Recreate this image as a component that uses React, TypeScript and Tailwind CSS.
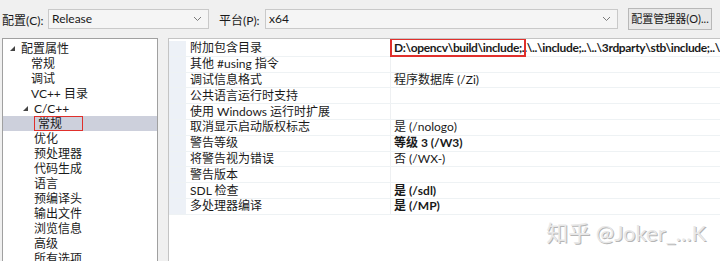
import { ReactNode } from 'react';

const FONT = {
  fontFamily: 'Lato, "Noto Sans CJK SC", sans-serif'
};

const treeItems: { label: string; level: number; open?: boolean; selected?: boolean }[] = [
  { label: '配置属性', level: 0, open: true },
  { label: '常规', level: 1 },
  { label: '调试', level: 1 },
  { label: 'VC++ 目录', level: 1 },
  { label: 'C/C++', level: 1, open: true },
  { label: '常规', level: 2, selected: true },
  { label: '优化', level: 2 },
  { label: '预处理器', level: 2 },
  { label: '代码生成', level: 2 },
  { label: '语言', level: 2 },
  { label: '预编译头', level: 2 },
  { label: '输出文件', level: 2 },
  { label: '浏览信息', level: 2 },
  { label: '高级', level: 2 },
  { label: '所有选项', level: 2 }
];

const props: { name: string; value?: string; bold?: boolean; first?: boolean }[] = [
  { name: '附加包含目录', first: true },
  { name: '其他 #using 指令' },
  { name: '调试信息格式', value: '程序数据库 (/Zi)' },
  { name: '公共语言运行时支持' },
  { name: '使用 Windows 运行时扩展' },
  { name: '取消显示启动版权标志', value: '是 (/nologo)' },
  { name: '警告等级', value: '等级 3 (/W3)', bold: true },
  { name: '将警告视为错误', value: '否 (/WX-)' },
  { name: '警告版本' },
  { name: 'SDL 检查', value: '是 (/sdl)', bold: true },
  { name: '多处理器编译', value: '是 (/MP)', bold: true }
];

function Chevron() {
  return (
    <svg width="9" height="6" viewBox="0 0 9 6" className="shrink-0">
      <path d="M1 1 L4.5 4.5 L8 1" fill="none" stroke="#7a7a7a" strokeWidth="1" />
    </svg>
  );
}

function Combo({ value, className }: { value: string; className: string }) {
  return (
    <div
      className={`h-[20px] border border-[#c9c9c9] bg-[#f5f5f5] flex items-center justify-between pl-[3px] pr-[6px] ${className}`}
    >
      <span className="text-[12px] text-[#1a1a1a]">{value}</span>
      <Chevron />
    </div>
  );
}

function Triangle() {
  return (
    <svg width="7" height="7" viewBox="0 0 7 7" className="shrink-0">
      <path d="M6 1 L6 6 L1 6 Z" fill="#444" />
    </svg>
  );
}

function Label({ children }: { children: ReactNode }) {
  return <span className="text-[12px] text-[#1a1a1a] whitespace-nowrap">{children}</span>;
}

export default function App() {
  return (
    <div
      className="w-[720px] h-[261px] bg-[#f0f0f0] overflow-hidden flex flex-col text-[#1a1a1a]"
      style={FONT}
    >
      <div className="h-[38px] shrink-0 flex items-center pl-[2px] pr-[8px]">
        <span className="w-[46px] shrink-0">
          <Label>配置(C):</Label>
        </span>
        <Combo value="Release" className="w-[161px]" />
        <span className="ml-[10px] w-[46px] shrink-0">
          <Label>平台(P):</Label>
        </span>
        <Combo value="x64" className="w-[353px]" />
        <div className="ml-[10px] w-[84px] h-[22px] border border-[#b8b8b8] bg-[#e8e8e8] flex items-center justify-center">
          <span className="text-[11px] whitespace-nowrap">配置管理器(O)...</span>
        </div>
      </div>

      <div className="flex-1 flex pl-[2px] gap-[10px]">
        <div className="w-[156px] border border-[#a0a0a0] border-b-0 bg-white pt-[2px] shrink-0">
          {treeItems.map((t, i) => (
            <div
              key={i}
              className={`h-[15px] flex items-center ${t.selected ? 'bg-[#cdd0dc]' : ''}`}
            >
              <div
                className={`flex items-center ${
                  t.level === 0 ? 'pl-[6px]' : t.level === 1 ? (t.open ? 'pl-[19px]' : 'pl-[28px]') : 'pl-[31px]'
                }`}
              >
                {t.open && <Triangle />}
                <span
                  className={`text-[12px] leading-[13px] whitespace-nowrap ${t.open ? 'ml-[5px]' : ''} ${
                    t.selected ? 'border border-[#e0302c] h-[15px] w-[49px] pl-[3px] leading-[13px]' : ''
                  }`}
                >
                  {t.label}
                </span>
              </div>
            </div>
          ))}
        </div>

        <div className="flex-1 border-l border-t border-[#c4c4c4] bg-white pt-[2px] overflow-hidden">
          {props.map((p, i) => (
            <div key={i} className="h-[15.8px] flex border-b border-[#eef2f4]">
              <div className="w-[17px] shrink-0 bg-[#edf1f7]" />
              <div className="w-[205px] shrink-0 pl-[4px] border-r border-[#eef0f2] flex items-center">
                <span className="text-[12px] leading-[14px] whitespace-nowrap">{p.name}</span>
              </div>
              <div className="flex-1 flex items-center pl-[3px] relative">
                {p.first ? (
                  <>
                    <span className="text-[12px] leading-[14px] font-bold tracking-[-0.35px] whitespace-nowrap">
                      D:\opencv\build\include;..\..\include;..\..\3rdparty\stb\include;..\
                    </span>
                    <div className="absolute left-[-1px] top-[-3px] w-[136px] h-[19px] border-2 border-[#e0302c]" />
                  </>
                ) : (
                  <span className={`text-[12px] leading-[14px] whitespace-nowrap ${p.bold ? 'font-bold' : ''}`}>
                    {p.value}
                  </span>
                )}
              </div>
            </div>
          ))}
          <div className="flex justify-end pr-[14px] pt-[4px]">
            <span
              className="text-[22px] leading-[28px] text-[#e8e8e8] whitespace-nowrap"
              style={{ textShadow: '1px 1px 0 #b5b5b5' }}
            >
              知乎 @Joker_...K
            </span>
          </div>
        </div>
      </div>
    </div>
  );
}
